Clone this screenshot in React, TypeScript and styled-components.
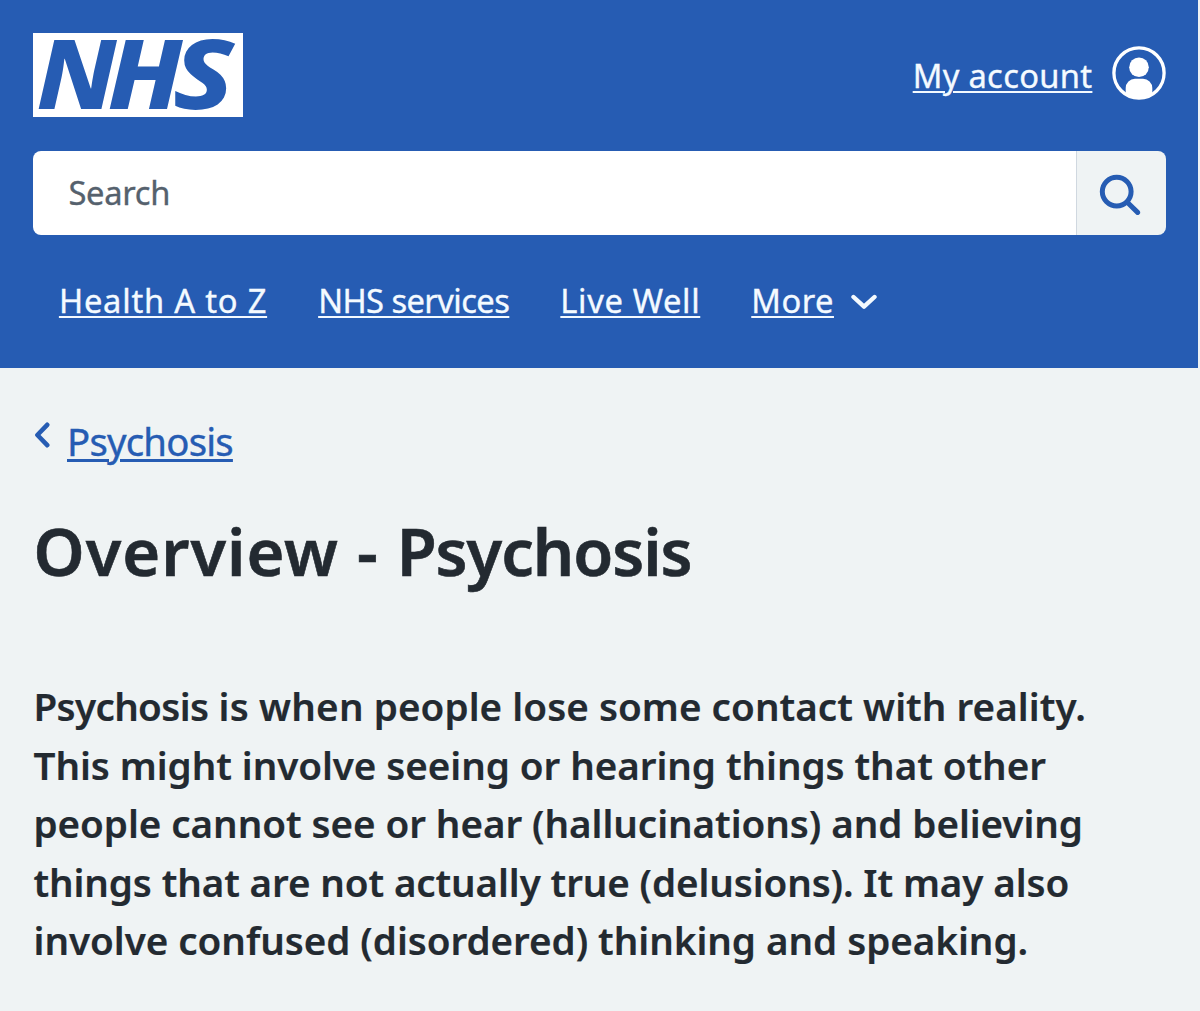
import React from 'react';
import { createGlobalStyle, styled } from 'styled-components';

const navLinks = [
   { label: 'Health A to Z', spacing: 0.78 },
   { label: 'NHS services', spacing: -0.56 },
   { label: 'Live Well', spacing: 0.64 },
   { label: 'More', spacing: 0.5, chevron: true },
];

const summary = [
   [{ text: 'Psychosis', spacing: -0.65 }, { text: ' is when', spacing: 0.2 }, { text: ' people lose some contact with reality.', spacing: 0.05 }],
   [{ text: 'This might involve seeing or hearing things that other', spacing: -0.06 }],
   [{ text: 'people cannot see or hear (hallucinations) and believing', spacing: -0.06 }],
   [{ text: 'things that are not actually true (delusions). It may also', spacing: -0.12 }],
   [{ text: 'involve confused (disordered) thinking and speaking.', spacing: -0.04 }],
];

const App = () => {
   return (
      <>
         <GlobalStyle />
         <Page>
            <Header>
               <TopRow>
                  <Logo viewBox="0 0 210 84" role="img" aria-label="NHS">
                     <LogoLetter x="3.5" y="76" textLength="80" lengthAdjust="spacingAndGlyphs">N</LogoLetter>
                     <LogoLetter x="74.5" y="76" textLength="75" lengthAdjust="spacingAndGlyphs">H</LogoLetter>
                     <LogoLetter x="140" y="76" textLength="61" lengthAdjust="spacingAndGlyphs">S</LogoLetter>
                  </Logo>
                  <Account>
                     <HeaderLink href="#" $spacing={0.32}>My account</HeaderLink>
                     <AccountIcon viewBox="0 0 54 54">
                        <circle cx="27" cy="27" r="25.1" fill="none" stroke="#fff" strokeWidth="3.3" />
                        <circle cx="27" cy="21.2" r="9.8" fill="#fff" />
                        <path d="M13.7 49V42a9.3 9.3 0 0 1 9.3-9.3h8a9.3 9.3 0 0 1 9.3 9.3V49A26.5 26.5 0 0 1 13.7 49z" fill="#fff" />
                     </AccountIcon>
                  </Account>
               </TopRow>
               <SearchForm>
                  <SearchField>Search</SearchField>
                  <SearchButton type="button" aria-label="Search">
                     <SearchIcon viewBox="0 0 42 42">
                        <circle cx="17.7" cy="17.6" r="14.4" />
                        <path d="M28.5 28.5L38.6 38.4" />
                     </SearchIcon>
                  </SearchButton>
               </SearchForm>
               <Nav>
                  {navLinks.map(({ label, spacing, chevron }) => (
                     <NavItem key={label}>
                        <HeaderLink href="#" $spacing={spacing}>{label}</HeaderLink>
                        {chevron && (
                           <DownChevron viewBox="0 0 28 16">
                              <path d="M3.5 3L14 12.6L24.5 3" />
                           </DownChevron>
                        )}
                     </NavItem>
                  ))}
               </Nav>
            </Header>
            <Main>
               <BackRow>
                  <BackChevron viewBox="0 0 16 26">
                     <path d="M13.2 2.8L3.4 13L13.2 23.2" />
                  </BackChevron>
                  <BackLink href="#">Psychosis</BackLink>
               </BackRow>
               <Title>
                  <Spaced $spacing={1}>Overview - </Spaced>
                  <Spaced $spacing={-1.05}>Psychosis</Spaced>
               </Title>
               <Summary>
                  {summary.map((line, i) => (
                     <SummaryLine key={i}>
                        {line.map(({ text, spacing }) => (
                           <Spaced key={text} $spacing={spacing}>{text}</Spaced>
                        ))}
                     </SummaryLine>
                  ))}
               </Summary>
            </Main>
         </Page>
      </>
   );
};

export default App;

const GlobalStyle = createGlobalStyle`
   * {
      box-sizing: border-box;
   }

   body {
      margin: 0;
      background-color: #eff3f4;
      font-family: 'Noto Sans', 'Open Sans', sans-serif;
      color: #232a31;
   }
`;

const Page = styled.div`
   width: 1200px;
   height: 1011px;
   overflow: hidden;
`;

const Header = styled.header`
   width: 1198px;
   height: 368.4px;
   padding: 33.4px 31.6px 0 33.4px;
   background-color: #265cb3;
`;

const TopRow = styled.div`
   display: flex;
   justify-content: space-between;
   align-items: center;
   height: 84px;
`;

const Logo = styled.svg`
   width: 210px;
   height: 84px;
   background-color: #fff;
   overflow: visible;
`;

const LogoLetter = styled.text`
   font-size: 95.5px;
   font-weight: 800;
   font-style: italic;
   fill: #265cb3;
`;

const Account = styled.div`
   display: flex;
   align-items: center;
   gap: 20px;
`;

const HeaderLink = styled.a<{ $spacing: number }>`
   padding-top: 2px;
   font-size: 32.7px;
   line-height: 40px;
   letter-spacing: ${({ $spacing }) => $spacing}px;
   color: #f4faff;
   white-space: nowrap;
   text-decoration: underline;
   text-decoration-thickness: 2px;
   text-underline-offset: 3px;
   -webkit-text-stroke: 0.35px #f4faff;
`;

const AccountIcon = styled.svg`
   width: 54px;
   height: 54px;
   margin-bottom: 5px;
`;

const SearchForm = styled.div`
   display: flex;
   height: 84px;
   margin-top: 33.3px;
   border-radius: 8px;
   overflow: hidden;
`;

const SearchField = styled.div`
   flex: 1;
   padding-left: 35px;
   background-color: #fff;
   font-size: 32.7px;
   line-height: 84px;
   letter-spacing: -0.3px;
   color: #55616d;
   -webkit-text-stroke: 0.35px #55616d;
`;

const SearchButton = styled.button`
   display: flex;
   justify-content: center;
   align-items: center;
   width: 90.5px;
   padding: 4px 2.5px 0 0;
   border: 0;
   border-left: 1px solid #d0d8e0;
   background-color: #eff3f4;
`;

const SearchIcon = styled.svg`
   width: 42px;
   height: 42px;
   fill: none;
   stroke: #265cb3;
   stroke-width: 5;
   stroke-linecap: round;
`;

const Nav = styled.nav`
   display: flex;
   gap: 51px;
   margin-top: 45px;
   padding-left: 25.5px;
`;

const NavItem = styled.div`
   display: flex;
   align-items: center;
   gap: 16px;
   height: 40px;
`;

const DownChevron = styled.svg`
   width: 28px;
   height: 16px;
   margin-top: 4px;
   fill: none;
   stroke: #f4faff;
   stroke-width: 4.4;
   stroke-linecap: round;
   stroke-linejoin: round;
`;

const Main = styled.main`
   padding: 47.6px 33.5px 0;
`;

const BackRow = styled.div`
   display: flex;
   gap: 17.5px;
   height: 50px;
`;

const BackChevron = styled.svg`
   width: 16px;
   height: 26px;
   margin-top: 6.5px;
   fill: none;
   stroke: #265cb3;
   stroke-width: 4.6;
   stroke-linecap: round;
   stroke-linejoin: round;
`;

const BackLink = styled.a`
   font-size: 38.3px;
   line-height: 50px;
   letter-spacing: -0.77px;
   color: #265cb3;
   text-decoration: underline;
   text-decoration-thickness: 2.5px;
   text-underline-offset: 3px;
   -webkit-text-stroke: 0.4px #265cb3;
`;

const Title = styled.h1`
   margin: 47.4px 0 0;
   font-size: 65px;
   font-weight: 600;
   line-height: 76px;
   white-space: pre;
   -webkit-text-stroke: 0.6px #232a31;
`;

const Summary = styled.p`
   margin: 87.7px 0 0;
   font-size: 38.6px;
   font-weight: 600;
   line-height: 58.6px;
   -webkit-text-stroke: 0.2px #232a31;
`;

const SummaryLine = styled.span`
   display: block;
   white-space: pre;
`;

const Spaced = styled.span<{ $spacing: number }>`
   letter-spacing: ${({ $spacing }) => $spacing}px;
`;
